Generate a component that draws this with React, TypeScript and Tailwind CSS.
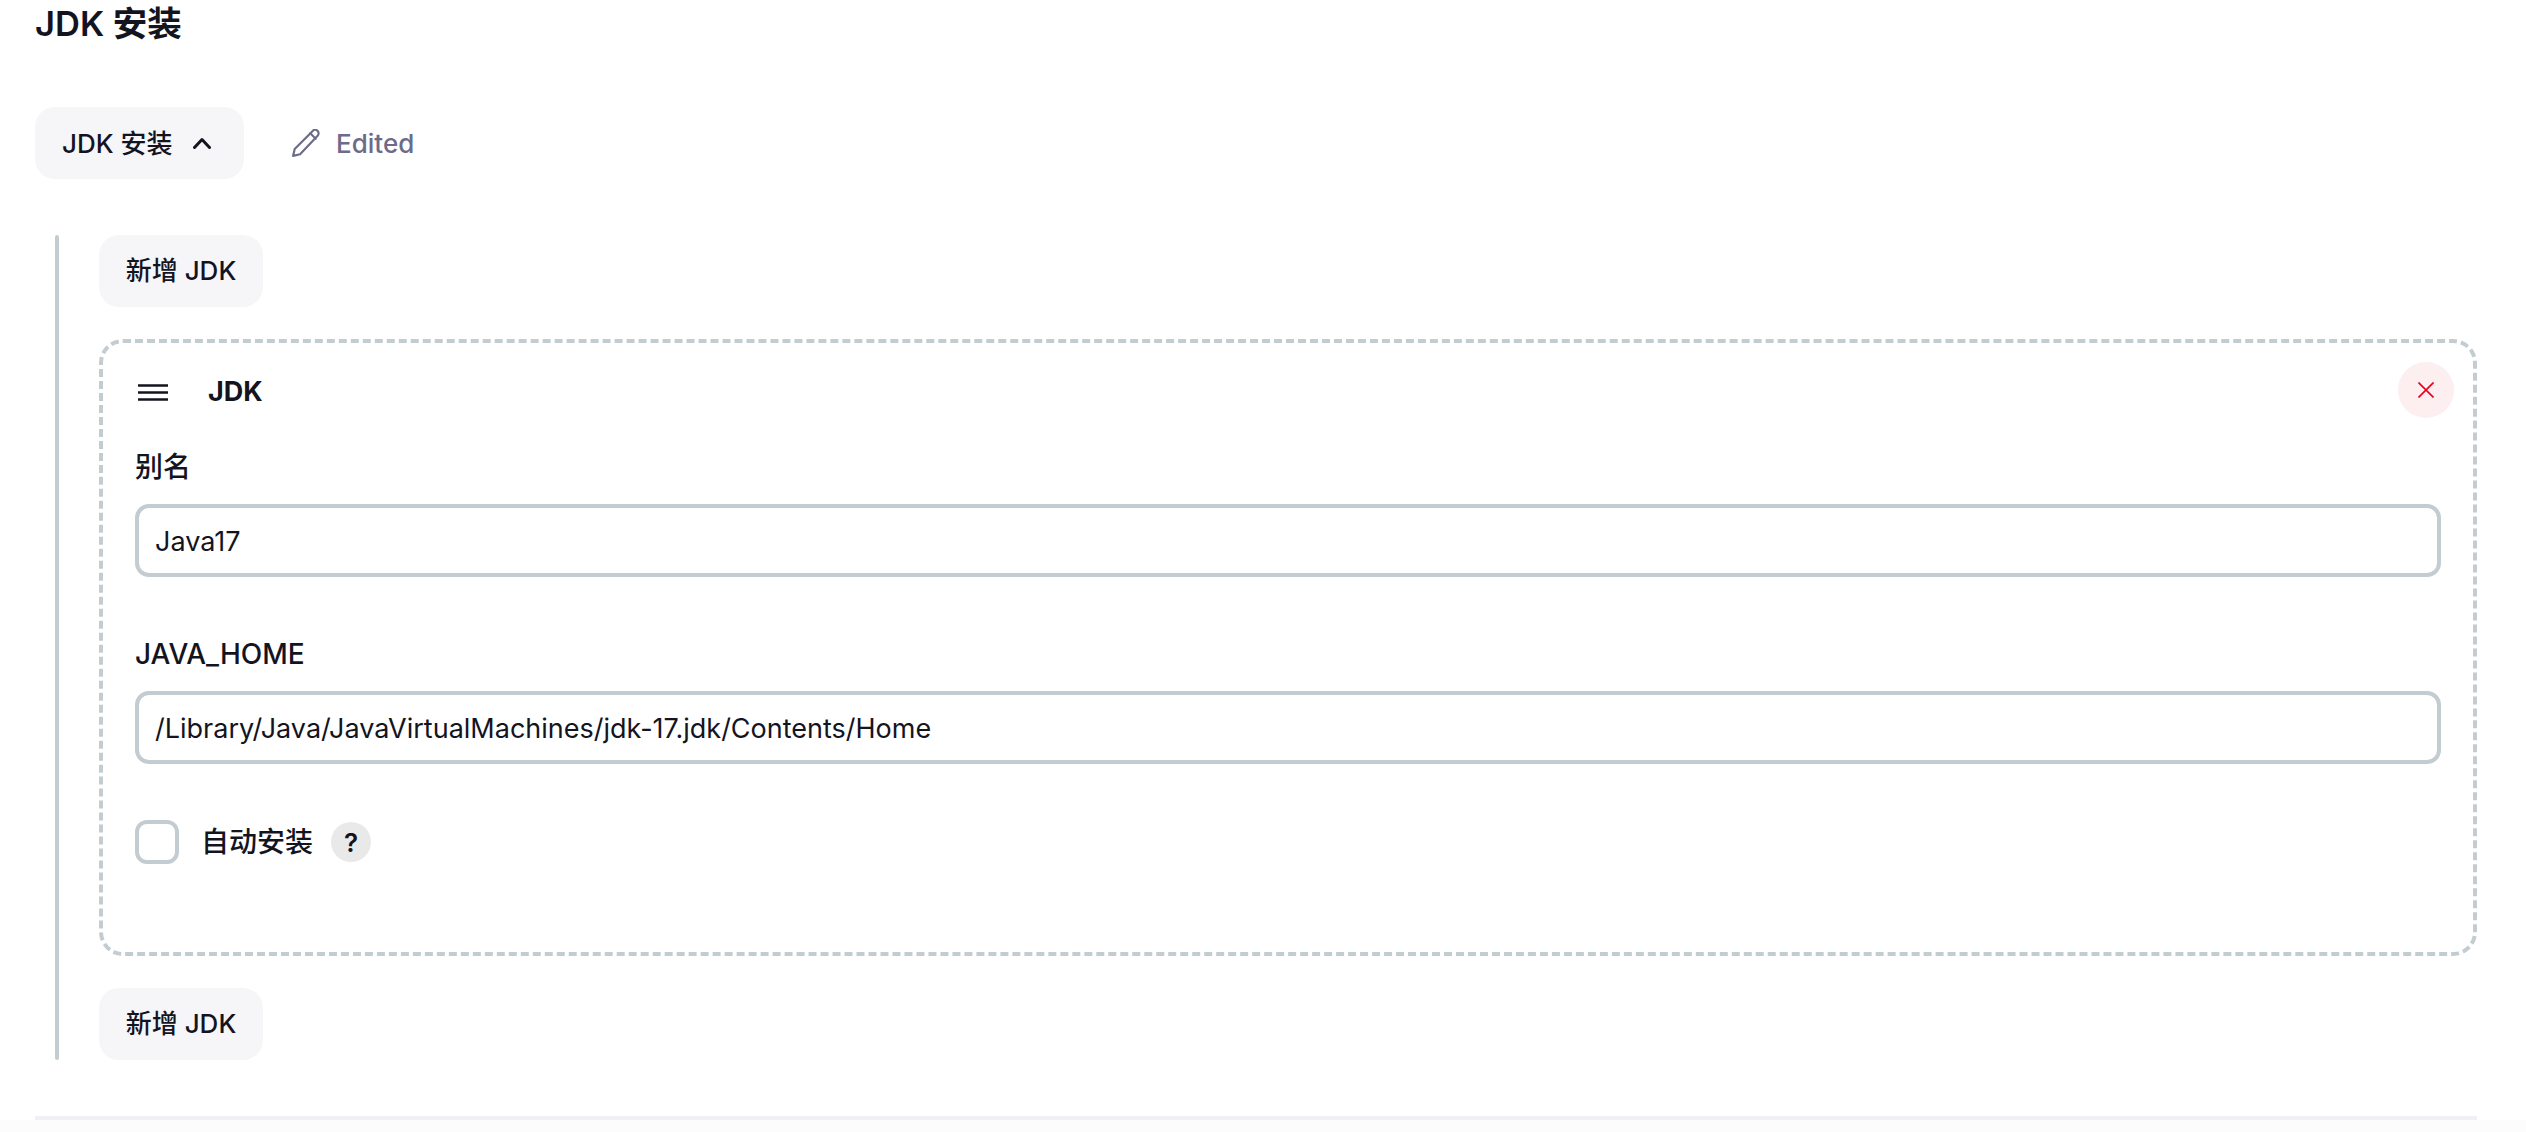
import React from 'react';

const fontStack = 'font-[Inter,"Noto_Sans_CJK_SC",sans-serif]';

const AddButton: React.FC = () => (
  <button className="h-[72px] w-[164px] rounded-[20px] bg-[#f6f6f9] pb-[1px] text-center text-[26px] font-medium text-[#14141f]">
    新增 JDK
  </button>
);

const Field: React.FC<{ label: string; value: string }> = ({ label, value }) => (
  <div className="mb-[56px]">
    <label className="block h-[40px] text-[28px] leading-[42px] font-medium text-[#14141f]">{label}</label>
    <input
      readOnly
      value={value}
      className="mt-[18px] h-[73px] w-full rounded-[14px] border-4 border-[#c3ccd1] bg-white px-[16px] pt-[1px] text-[27px] text-[#14141f] outline-none"
    />
  </div>
);

export default function App() {
  return (
    <div className={`h-[1132px] w-[2526px] overflow-hidden bg-white ${fontStack}`}>
      <div className="pr-[49px] pl-[35px]">
        <h1 className="h-[48px] text-[34.5px] leading-[48px] font-semibold text-[#14141f]">JDK 安装</h1>

        <div className="mt-[59px] flex items-center">
          <button className="flex h-[72px] w-[209px] items-center rounded-[20px] bg-[#f6f6f9] pl-[27px] text-[26px] font-medium text-[#14141f]">
            JDK 安装
            <svg viewBox="0 0 18 12" className="ml-[20px] h-[12px] w-[18px]" fill="none" stroke="currentColor" strokeWidth="3" strokeLinecap="round" strokeLinejoin="round">
              <path d="M1.5 10.5L9 2.5l7.5 8" />
            </svg>
          </button>
          <div className="ml-[48px] flex items-center text-[26px] font-medium text-[#6d6b8a]">
            <svg viewBox="1 1 26 26" className="h-[28px] w-[28px]" fill="none" stroke="currentColor" strokeWidth="2" strokeLinecap="round" strokeLinejoin="round">
              <path d="M2 26l1.5-6.5L20 3a2.8 2.8 0 0 1 5 4L8.5 24.5z" />
              <path d="M18 5l5 5" />
            </svg>
            <span className="ml-[16px]">Edited</span>
          </div>
        </div>

        <div className="mt-[56px] ml-[20px] flex gap-[40px]">
          <div className="w-[4px] rounded-full bg-[#c3ccd1]" />
          <div className="flex-1">
            <AddButton />
            <div className="relative mt-[32px] h-[617px] rounded-[24px] border-4 border-dashed border-[#c3ccd1] px-[32px] pt-[29px]">
              <div className="flex h-[40px] items-center">
                <svg viewBox="0 0 30 17" className="ml-[3px] h-[17px] w-[30px]" fill="none" stroke="#14141f" strokeWidth="2.6">
                  <path d="M0 1.5h30M0 8.5h30M0 15.5h30" />
                </svg>
                <span className="ml-[40px] text-[27px] font-bold text-[#14141f]">JDK</span>
              </div>
              <button className="absolute top-[19px] right-[19px] flex h-[56px] w-[56px] items-center justify-center rounded-full bg-[#fdeeef]">
                <svg viewBox="0 0 16 16" className="h-[16px] w-[16px]" fill="none" stroke="#e6001f" strokeWidth="1.6">
                  <path d="M0.5 0.5l15 15M15.5 0.5l-15 15" />
                </svg>
              </button>
              <div className="mt-[34px]">
                <Field label="别名" value="Java17" />
                <Field label="JAVA_HOME" value="/Library/Java/JavaVirtualMachines/jdk-17.jdk/Contents/Home" />
              </div>
              <div className="flex items-center">
                <div className="h-[44px] w-[44px] rounded-[12px] border-4 border-[#c3ccd1]" />
                <span className="ml-[22px] text-[28px] font-medium text-[#14141f]">自动安装</span>
                <span className="ml-[18px] flex h-[40px] w-[40px] items-center justify-center rounded-full bg-[#e9e9e9] text-[26px] font-semibold text-[#14141f]">?</span>
              </div>
            </div>
            <div className="mt-[32px]">
              <AddButton />
            </div>
          </div>
        </div>

        <div className="mt-[56px] h-[4px] bg-[#f1f0f4]" />
      </div>
      <div className="h-[12px] bg-[#fcfcfc]" />
    </div>
  );
}
